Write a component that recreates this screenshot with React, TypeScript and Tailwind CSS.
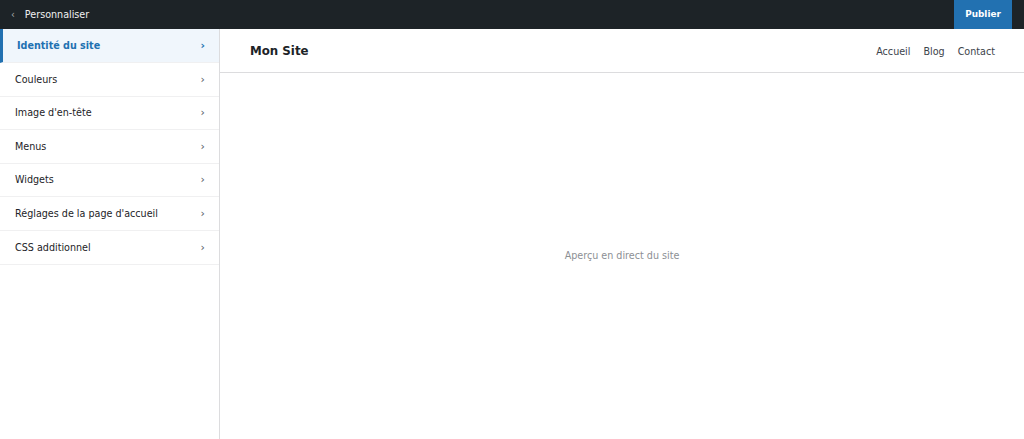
import React from "react";

const sections = [
  "Identité du site",
  "Couleurs",
  "Image d'en-tête",
  "Menus",
  "Widgets",
  "Réglages de la page d'accueil",
  "CSS additionnel",
];

export default function App() {
  return (
    <div
      className="flex h-[439px] w-[1024px] flex-col overflow-hidden bg-white text-[#1d2327]"
      style={{ fontFamily: '"DejaVu Sans", sans-serif' }}
    >
      {/* top toolbar */}
      <div className="flex h-[29.4px] shrink-0 items-center justify-between bg-[#1d2327]">
        <div className="flex items-center pl-[11px] text-[9.6px] text-[#f0f0f1]">
          <span className="mr-[10px] text-[#a7aaad]">‹</span>
          <span>Personnaliser</span>
        </div>
        <button className="mr-[12px] h-[29.4px] w-[58px] bg-[#2271b1] text-[8.9px] font-bold text-white">
          Publier
        </button>
      </div>

      <div className="flex min-h-0 flex-1">
        {/* customizer panel */}
        <aside className="w-[220px] shrink-0 border-r border-[#dcdcde] bg-white">
          {sections.map((label, i) => {
            const active = i === 0;
            return (
              <div
                key={label}
                className={
                  active
                    ? "flex h-[33.6px] items-center justify-between border-b border-[#f0f0f1] border-l-[3px] border-l-[#2271b1] bg-[#f0f6fc] pl-[14px] pr-[14px] pt-[1px] text-[9.6px] font-bold text-[#2271b1]"
                    : "flex h-[33.6px] items-center justify-between border-b border-[#f0f0f1] pl-[15px] pr-[14px] pt-[1px] text-[9.6px] text-[#1d2327]"
                }
              >
                <span>{label}</span>
                <span className={active ? "text-[11px] text-[#2271b1]" : "text-[11px] text-[#50575e]"}>›</span>
              </div>
            );
          })}
        </aside>

        {/* site preview */}
        <main className="flex min-w-0 flex-1 flex-col">
          <header className="flex h-[44px] shrink-0 items-center justify-between border-b border-[#dcdcde] pl-[30px] pr-[29px] pt-[2px]">
            <span className="text-[11.8px] font-bold text-[#1d2327]">Mon Site</span>
            <nav className="flex gap-[13px] text-[9.6px] text-[#3c434a]">
              <span>Accueil</span>
              <span>Blog</span>
              <span>Contact</span>
            </nav>
          </header>
          <div className="flex flex-1 items-center justify-center text-[9.6px] text-[#8c8f94]">
            Aperçu en direct du site
          </div>
        </main>
      </div>
    </div>
  );
}
